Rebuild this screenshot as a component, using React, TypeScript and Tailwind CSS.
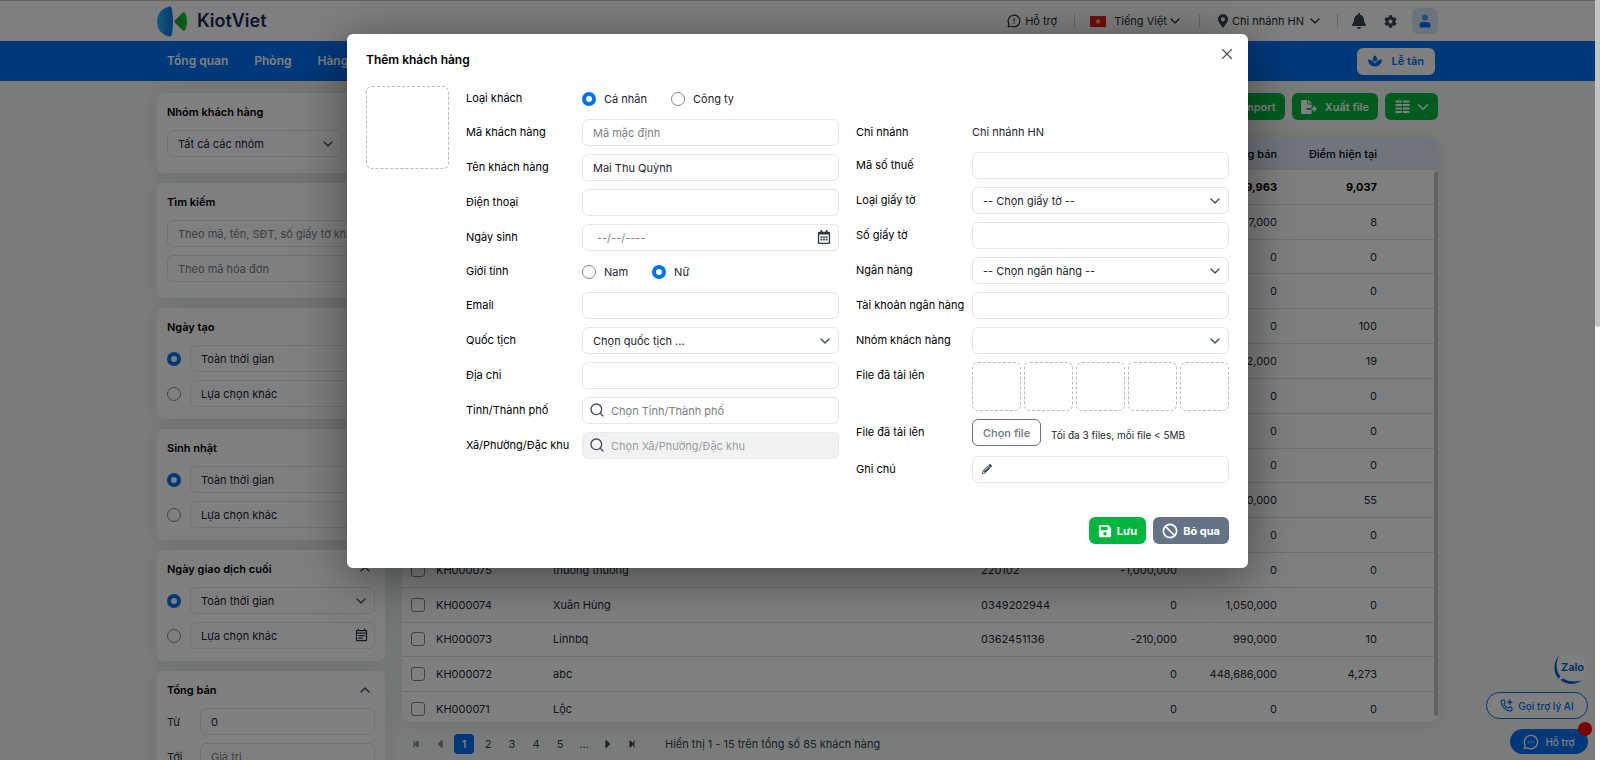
import type { ReactNode } from "react";
import { Ban, ChevronDown, ChevronUp, MessageCircleMore, MessageCircleWarning, Search, X } from "lucide-react";
import {
  FaBell,
  FaCaretLeft,
  FaCaretRight,
  FaCog,
  FaFileExport,
  FaFileImport,
  FaMapMarkerAlt,
  FaPencilAlt,
  FaRegCalendarAlt,
  FaSave,
  FaSpa,
  FaStepBackward,
  FaStepForward,
} from "react-icons/fa";
import { MdOutlineEventNote } from "react-icons/md";

const customers = [
  { code: "KH000085", name: "", phone: "", debt: "0", total: "37,000", points: "8" },
  { code: "KH000084", name: "", phone: "", debt: "0", total: "0", points: "0" },
  { code: "KH000083", name: "", phone: "", debt: "0", total: "0", points: "0" },
  { code: "KH000082", name: "", phone: "", debt: "0", total: "0", points: "100" },
  { code: "KH000081", name: "", phone: "", debt: "0", total: "2,000", points: "19" },
  { code: "KH000080", name: "", phone: "", debt: "0", total: "0", points: "0" },
  { code: "KH000079", name: "", phone: "", debt: "0", total: "0", points: "0" },
  { code: "KH000078", name: "", phone: "", debt: "0", total: "0", points: "0" },
  { code: "KH000077", name: "", phone: "", debt: "0", total: "550,000", points: "55" },
  { code: "KH000076", name: "", phone: "", debt: "0", total: "0", points: "0" },
  { code: "KH000075", name: "thương thương", phone: "220102", debt: "-1,000,000", total: "0", points: "0" },
  { code: "KH000074", name: "Xuân Hùng", phone: "0349202944", debt: "0", total: "1,050,000", points: "0" },
  { code: "KH000073", name: "Linhbq", phone: "0362451136", debt: "-210,000", total: "990,000", points: "10" },
  { code: "KH000072", name: "abc", phone: "", debt: "0", total: "448,686,000", points: "4,273" },
  { code: "KH000071", name: "Lộc", phone: "", debt: "0", total: "0", points: "0" },
];

const fieldClass =
  "block h-[27px] w-full rounded-md border border-[#e3e5e9] bg-white px-2.5 text-[#1d2433] placeholder:text-[#7b8086] focus:outline-none";

const radioClass =
  "h-3.5 w-3.5 shrink-0 appearance-none rounded-full border border-[#7d8794] bg-white checked:border-4 checked:border-[#0070f4]";

function SelectBox({ id, label, children }: { id?: string; label?: string; children: ReactNode }) {
  return (
    <div className="relative w-full">
      <select id={id} aria-label={label} className={`${fieldClass} appearance-none pr-6`}>
        {children}
      </select>
      <ChevronDown className="pointer-events-none absolute right-1.5 top-1.5 h-4 w-4 text-[#3f4b5b]" />
    </div>
  );
}

function Field({ label, htmlFor, children }: { label: string; htmlFor?: string; children: ReactNode }) {
  return (
    <div className="flex">
      <label htmlFor={htmlFor} className="h-[27px] w-[116px] shrink-0 whitespace-nowrap leading-[26px] text-black">
        {label}
      </label>
      <div className="min-w-0 flex-1">{children}</div>
    </div>
  );
}

function RadioRow({ label, name, options, selected }: { label: string; name: string; options: string[]; selected: string }) {
  return (
    <fieldset className="flex h-[25px] items-center">
      <legend className="float-left w-[116px] leading-[25px] text-black">{label}</legend>
      <div className="flex gap-6">
        {options.map((option) => (
          <label key={option} className="flex items-center gap-2 text-[#1d2433]">
            <input type="radio" name={name} defaultChecked={option === selected} className={radioClass} />
            {option}
          </label>
        ))}
      </div>
    </fieldset>
  );
}

function Logo() {
  return (
    <a href="#home" className="flex items-center gap-2.5">
      <svg width="30" height="31" viewBox="0 0 30 31" aria-hidden="true">
        <defs>
          <linearGradient id="logo-blue" x1="0" y1="0" x2="1" y2="0">
            <stop offset="0" stopColor="#27b4f5" />
            <stop offset="1" stopColor="#0a6fe8" />
          </linearGradient>
          <linearGradient id="logo-green" x1="0" y1="0" x2="1" y2="0">
            <stop offset="0" stopColor="#0f9f3f" />
            <stop offset="1" stopColor="#22c52e" />
          </linearGradient>
        </defs>
        <path d="M12 0.5C4 2.5 0 8.500 0 15.500S4 28.500 12 30.500C13.500 30.800 14.500 30 14.800 28.500C16.400 20 16.400 11 14.800 2.500C14.500 1 13.500 0.200 12 0.500Z" fill="url(#logo-blue)" />
        <path d="M18.200 14L25.500 6.800C26.800 5.800 28 6.200 28.600 7.800C30.500 12.500 30.500 18.500 28.600 23.200C28 24.800 26.800 25.200 25.500 24.200L18.200 17C17.300 16 17.300 15 18.200 14Z" fill="url(#logo-green)" />
      </svg>
      <span className="text-lg font-semibold text-[#152a5c]">KiotViet</span>
    </a>
  );
}

function VietnamFlag() {
  return (
    <svg width="16" height="11" viewBox="0 0 16 11" aria-hidden="true">
      <rect width="16" height="11" fill="#e01b22" />
      <path d="M8 2.200L8.800 4.500H11.200L9.300 5.900L10 8.200L8 6.800L6 8.200L6.700 5.900L4.800 4.500H7.200Z" fill="#ffdc00" />
    </svg>
  );
}

function Header() {
  return (
    <header>
      <div className="h-[41px] border-t border-[#c5c5c5] bg-white">
        <div className="mx-auto flex h-full max-w-[1281px] items-center justify-between">
          <Logo />
          <div className="flex items-center text-[#262b33]">
            <a href="#help" className="flex items-center gap-1">
              <MessageCircleWarning className="h-3.5 w-3.5" />
              Hỗ trợ
            </a>
            <span className="ml-[17px] mr-[15px] h-3.5 w-px bg-[#c9ccd1]" />
            <button type="button" className="flex items-center gap-2">
              <VietnamFlag />
              <span>Tiếng Việt</span>
              <ChevronDown className="-ml-2 h-4 w-4" />
            </button>
            <span className="ml-4 mr-[18px] h-3.5 w-px bg-[#c9ccd1]" />
            <button type="button" className="flex items-center gap-1">
              <FaMapMarkerAlt className="h-3.5 w-2.5 text-[#3a4250]" />
              <span>Chi nhánh HN</span>
              <ChevronDown className="-ml-px h-4 w-4" />
            </button>
            <span className="mx-3.5 h-3.5 w-px bg-[#c9ccd1]" />
            <button type="button" aria-label="Thông báo" className="mr-[18px]">
              <FaBell className="h-4 w-3.5 text-[#3a4250]" />
            </button>
            <button type="button" aria-label="Thiết lập" className="mr-[15px]">
              <FaCog className="h-[13px] w-[13px] text-[#3a4250]" />
            </button>
            <button
              type="button"
              aria-label="Tài khoản"
              className="flex h-[26px] w-[26px] items-center justify-center rounded-md bg-[#dbe7fb]"
            >
              <svg width="12" height="14" viewBox="0 0 12 14" aria-hidden="true">
                <circle cx="6" cy="3.500" r="3" fill="#4b96f5" />
                <path d="M0.500 12V11C0.500 9 2 8 4 8H8C10 8 11.500 9 11.500 11V12C11.500 13 11 13.500 10 13.500H2C1 13.500 0.500 13 0.500 12Z" fill="#0070f4" />
              </svg>
            </button>
          </div>
        </div>
      </div>
      <div className="h-10 bg-[#0070f4]">
        <div className="mx-auto flex h-full max-w-[1281px] items-center justify-between pl-2.5 pr-[3px]">
          <nav className="flex gap-[26px] text-xs font-semibold text-white">
            <a href="#overview">Tổng quan</a>
            <a href="#rooms">Phòng</a>
            <a href="#products">Hàng hóa</a>
          </nav>
          <a
            href="#reception"
            className="flex h-[27px] items-center gap-2.5 rounded-md bg-white px-[11px] font-semibold text-[#0070f4]"
          >
            <FaSpa className="h-3.5 w-3.5" />
            Lễ tân
          </a>
        </div>
      </div>
    </header>
  );
}

function FilterCard({ title, className, children }: { title: string; className: string; children: ReactNode }) {
  return (
    <section className={`rounded-md bg-white px-2.5 pt-2.5 shadow-[0_0_20px_rgba(70,85,130,0.16)] ${className}`}>
      <div className="mb-[9px] flex h-[18px] items-center justify-between">
        <h2 className="font-semibold text-black">{title}</h2>
        <button type="button" aria-label={`Thu gọn ${title}`} className="mr-0.5">
          <ChevronUp className="h-4 w-4 text-[#3f4b5b]" />
        </button>
      </div>
      <div className="flex flex-col gap-2">{children}</div>
    </section>
  );
}

function DateFilter({ title, name }: { title: string; name: string }) {
  return (
    <FilterCard title={title} className="pb-3">
      <div className="flex items-center gap-[9px]">
        <input type="radio" name={name} aria-label="Toàn thời gian" defaultChecked className={radioClass} />
        <SelectBox label={title}>
          <option>Toàn thời gian</option>
        </SelectBox>
      </div>
      <div className="flex items-center gap-[9px]">
        <input type="radio" name={name} aria-label="Lựa chọn khác" className={radioClass} />
        <div className="relative w-full">
          <input type="text" aria-label={`${title} khác`} defaultValue="Lựa chọn khác" className={fieldClass} />
          <MdOutlineEventNote className="absolute right-1.5 top-1.5 h-[15px] w-[15px] text-[#2b3646]" />
        </div>
      </div>
    </FilterCard>
  );
}

function Sidebar() {
  return (
    <aside className="flex w-[228px] shrink-0 flex-col gap-2.5">
      <FilterCard title="Nhóm khách hàng" className="pb-4">
        <div className="w-[175px]">
          <SelectBox label="Nhóm khách hàng">
            <option>Tất cả các nhóm</option>
          </SelectBox>
        </div>
      </FilterCard>
      <FilterCard title="Tìm kiếm" className="pb-4">
        <input type="text" aria-label="Tìm khách hàng" placeholder="Theo mã, tên, SĐT, số giấy tờ khách" className={fieldClass} />
        <input type="text" aria-label="Tìm hóa đơn" placeholder="Theo mã hóa đơn" className={fieldClass} />
      </FilterCard>
      <DateFilter title="Ngày tạo" name="created" />
      <DateFilter title="Sinh nhật" name="birthday" />
      <DateFilter title="Ngày giao dịch cuối" name="last-trade" />
      <FilterCard title="Tổng bán" className="pb-3">
        <div className="flex items-center">
          <label htmlFor="total-from" className="w-[33px] shrink-0 text-[#262b33]">Từ</label>
          <input id="total-from" type="text" defaultValue="0" className={fieldClass} />
        </div>
        <div className="flex items-center">
          <label htmlFor="total-to" className="w-[33px] shrink-0 text-[#262b33]">Tới</label>
          <input id="total-to" type="text" placeholder="Giá trị" className={fieldClass} />
        </div>
      </FilterCard>
    </aside>
  );
}

function Toolbar() {
  const buttonClass = "flex h-[27px] items-center rounded-md bg-[#00b63e]";
  return (
    <div className="flex justify-end gap-[7px] font-semibold text-white">
      <button type="button" className={`${buttonClass} gap-2 px-[9px]`}>
        <FaFileImport className="h-3.5 w-4" />
        Import
      </button>
      <button type="button" className={`${buttonClass} gap-2 px-[9px]`}>
        <FaFileExport className="h-3.5 w-4" />
        Xuất file
      </button>
      <button type="button" aria-label="Chọn cột hiển thị" className={`${buttonClass} gap-1 pl-2.5 pr-1.5`}>
        <svg width="15" height="13" viewBox="0 0 15 13" aria-hidden="true" stroke="currentColor" strokeWidth="2">
          <path d="M0.500 1.500H7M8 1.500H14.500M0.500 5H7M8 5H14.500M0.500 8.500H7M8 8.500H14.500M0.500 12H7M8 12H14.500" />
        </svg>
        <ChevronDown className="h-[18px] w-[18px]" />
      </button>
    </div>
  );
}

function CustomerTable() {
  const cellClass = "border-b border-[#dcdee2] p-0";
  return (
    <div className="relative mt-[19px] h-[583px] overflow-hidden rounded-lg bg-white shadow-[0_0_20px_rgba(70,85,130,0.16)]">
      <table className="h-[588px] w-full table-fixed border-separate border-spacing-0 text-left text-[#262b33]">
        <colgroup>
          <col className="w-[34px]" />
          <col className="w-[117px]" />
          <col />
          <col className="w-[90px]" />
          <col className="w-[106px]" />
          <col className="w-[100px]" />
          <col className="w-[100px]" />
          <col className="w-[61px]" />
        </colgroup>
        <thead>
          <tr className="h-[31px] bg-[#dfe9fb] text-black">
            <th className={`${cellClass} pl-[9px]`}>
              <input type="checkbox" aria-label="Chọn tất cả" className="block h-3.5 w-3.5 appearance-none rounded-[3px] border border-[#7d8794]" />
            </th>
            <th className={`${cellClass} font-medium`}>Mã khách hàng</th>
            <th className={`${cellClass} font-medium`}>Tên khách hàng</th>
            <th className={`${cellClass} font-medium`}>Điện thoại</th>
            <th className={`${cellClass} text-right font-medium`}>Nợ hiện tại</th>
            <th className={`${cellClass} text-right font-medium`}>Tổng bán</th>
            <th className={`${cellClass} text-right font-medium`}>Điểm hiện tại</th>
            <th className={cellClass} />
          </tr>
        </thead>
        <tbody>
          <tr className="font-bold text-black">
            <td colSpan={5} className={cellClass} />
            <td className={`${cellClass} text-right`}>452,739,963</td>
            <td className={`${cellClass} text-right`}>9,037</td>
            <td className={cellClass} />
          </tr>
          {customers.map((customer) => (
            <tr key={customer.code}>
              <td className={`${cellClass} pl-[9px]`}>
                <input
                  type="checkbox"
                  aria-label={`Chọn ${customer.code}`}
                  className="block h-3.5 w-3.5 appearance-none rounded-[3px] border border-[#7d8794]"
                />
              </td>
              <td className={cellClass}>{customer.code}</td>
              <td className={cellClass}>{customer.name}</td>
              <td className={cellClass}>{customer.phone}</td>
              <td className={`${cellClass} text-right`}>{customer.debt}</td>
              <td className={`${cellClass} text-right`}>{customer.total}</td>
              <td className={`${cellClass} text-right`}>{customer.points}</td>
              <td className={cellClass} />
            </tr>
          ))}
        </tbody>
      </table>
      <div className="absolute bottom-0 right-0 top-[31px] w-1 bg-white pb-1.5 pt-px">
        <div className="h-full rounded-full bg-[#c4c4c4]" />
      </div>
    </div>
  );
}

function Pagination() {
  const cellClass = "flex h-5 w-5 items-center justify-center rounded";
  return (
    <div className="mt-3 flex items-center gap-1 pl-1 text-[#3a4250]">
      <button type="button" aria-label="Trang đầu" className={`${cellClass} text-[#7d8794]`}>
        <FaStepBackward className="h-2 w-2" />
      </button>
      <button type="button" aria-label="Trang trước" className={`${cellClass} text-[#7d8794]`}>
        <FaCaretLeft className="h-3.5 w-3.5" />
      </button>
      <button type="button" className={`${cellClass} bg-[#0070f4] font-semibold text-white`}>1</button>
      <button type="button" className={cellClass}>2</button>
      <button type="button" className={cellClass}>3</button>
      <button type="button" className={cellClass}>4</button>
      <button type="button" className={cellClass}>5</button>
      <button type="button" className={cellClass}>...</button>
      <button type="button" aria-label="Trang sau" className={cellClass}>
        <FaCaretRight className="h-3.5 w-3.5" />
      </button>
      <button type="button" aria-label="Trang cuối" className={cellClass}>
        <FaStepForward className="h-2 w-2" />
      </button>
      <span className="ml-[19px]">Hiển thị 1 - 15 trên tổng số 85 khách hàng</span>
    </div>
  );
}

function ChatButtons() {
  return (
    <div className="absolute bottom-1.5 right-[7px] flex flex-col items-end text-[10px] text-[#0070f4]">
      <a href="#zalo" aria-label="Zalo" className="mb-2">
        <svg width="34" height="32" viewBox="0 0 34 32" aria-hidden="true">
          <circle cx="17" cy="16" r="16" fill="#fff" />
          <path d="M5.500 3.500C-1 9.500-1 21 4.500 26.500L6.500 24.500C1.500 19 1.500 9.500 5.500 3.500Z" fill="#0058d8" />
          <path d="M6 27.500C12 33 21 33.500 27.500 28.500C20 30.500 13 29.500 9.500 26.500C8.500 27.500 7.200 27.800 6 27.500Z" fill="#0058d8" />
          <text x="7" y="19" fontSize="11" fontWeight="600" fill="#0058d8">Zalo</text>
        </svg>
      </a>
      <button type="button" className="mb-2.5 flex h-[27px] w-[102px] items-center justify-center gap-[5px] rounded-full border border-[#0070f4] bg-white font-medium">
        <svg width="13" height="13" viewBox="0 0 24 24" fill="none" stroke="currentColor" strokeWidth="2.200" strokeLinecap="round" strokeLinejoin="round" aria-hidden="true">
          <path d="M13.832 16.568a1 1 0 0 0 1.213-.303l.355-.465A2 2 0 0 1 17 15h3a2 2 0 0 1 2 2v3a2 2 0 0 1-2 2A18 18 0 0 1 2 4a2 2 0 0 1 2-2h3a2 2 0 0 1 2 2v3a2 2 0 0 1-.800 1.600l-.468.351a1 1 0 0 0-.292 1.233 14 14 0 0 0 6.392 6.384" />
          <path d="M18 1L19.300 4.700L23 6L19.300 7.300L18 11L16.700 7.300L13 6L16.700 4.700Z" fill="currentColor" strokeWidth="1" />
        </svg>
        Gọi trợ lý AI
      </button>
      <button type="button" className="relative flex h-[25px] w-[78px] items-center justify-center gap-1.5 rounded-full bg-[#0070f4] font-medium text-white">
        <MessageCircleMore className="h-4 w-4" />
        Hỗ trợ
        <span className="absolute -right-1 -top-[7px] h-3.5 w-3.5 rounded-full bg-[#f40000]" />
      </button>
    </div>
  );
}

function CustomerDialog() {
  const searchClass = "pointer-events-none absolute left-[7px] top-[5px] h-4 w-4 text-[#3f4b5b]";
  return (
    <div
      role="dialog"
      aria-labelledby="dialog-title"
      className="w-[901px] max-w-full rounded-md bg-white px-[19px] pb-6 pt-[15px] shadow-[0_8px_50px_rgba(0,0,0,0.45)]"
    >
      <div className="flex justify-between">
        <h1 id="dialog-title" className="pt-px text-xs font-semibold leading-5 text-black">Thêm khách hàng</h1>
        <button type="button" aria-label="Đóng" className="-mr-[7px] -mt-1 flex h-[18px] w-[18px] items-center justify-center text-[#4a4a4a]">
          <X className="h-[18px] w-[18px]" strokeWidth={1.5} />
        </button>
      </div>

      <form className="mt-4 flex gap-[17px]">
        <div className="h-[83px] w-[83px] shrink-0 rounded-md border border-dashed border-[#b9b9b9]" />

        <div className="flex flex-1 flex-col gap-2">
          <RadioRow label="Loại khách" name="kind" options={["Cá nhân", "Công ty"]} selected="Cá nhân" />
          <Field label="Mã khách hàng" htmlFor="code">
            <input id="code" type="text" placeholder="Mã mặc định" className={fieldClass} />
          </Field>
          <Field label="Tên khách hàng" htmlFor="name">
            <input id="name" type="text" defaultValue="Mai Thu Quỳnh" className={fieldClass} />
          </Field>
          <Field label="Điện thoại" htmlFor="phone">
            <input id="phone" type="tel" className={fieldClass} />
          </Field>
          <Field label="Ngày sinh" htmlFor="birthday">
            <div className="relative">
              <input id="birthday" type="text" placeholder="--/--/----" className={`${fieldClass} pl-3.5`} />
              <FaRegCalendarAlt className="absolute right-2 top-1.5 h-3.5 w-3.5 text-[#2b3646]" />
            </div>
          </Field>
          <RadioRow label="Giới tính" name="gender" options={["Nam", "Nữ"]} selected="Nữ" />
          <Field label="Email" htmlFor="email">
            <input id="email" type="email" className={fieldClass} />
          </Field>
          <Field label="Quốc tịch" htmlFor="country">
            <SelectBox id="country">
              <option>Chọn quốc tịch ...</option>
            </SelectBox>
          </Field>
          <Field label="Địa chỉ" htmlFor="address">
            <input id="address" type="text" className={fieldClass} />
          </Field>
          <Field label="Tỉnh/Thành phố" htmlFor="province">
            <div className="relative">
              <input id="province" type="text" placeholder="Chọn Tỉnh/Thành phố" className={`${fieldClass} pl-7`} />
              <Search className={searchClass} />
            </div>
          </Field>
          <Field label="Xã/Phường/Đặc khu" htmlFor="ward">
            <div className="relative">
              <input
                id="ward"
                type="text"
                disabled
                placeholder="Chọn Xã/Phường/Đặc khu"
                className="block h-[27px] w-full rounded-md border border-[#ebebeb] bg-[#f2f2f2] pl-7 pr-2.5 placeholder:text-[#9a9ea3]"
              />
              <Search className={searchClass} />
            </div>
          </Field>
        </div>

        <div className="flex flex-1 flex-col gap-2 pt-[33px]">
          <div className="flex h-[25px] items-center">
            <span className="w-[116px] text-black">Chi nhánh</span>
            <span className="text-[#1d2433]">Chi nhánh HN</span>
          </div>
          <Field label="Mã số thuế" htmlFor="tax">
            <input id="tax" type="text" className={fieldClass} />
          </Field>
          <Field label="Loại giấy tờ" htmlFor="paper-type">
            <SelectBox id="paper-type">
              <option>-- Chọn giấy tờ --</option>
            </SelectBox>
          </Field>
          <Field label="Số giấy tờ" htmlFor="paper-number">
            <input id="paper-number" type="text" className={fieldClass} />
          </Field>
          <Field label="Ngân hàng" htmlFor="bank">
            <SelectBox id="bank">
              <option>-- Chọn ngân hàng --</option>
            </SelectBox>
          </Field>
          <Field label="Tài khoản ngân hàng" htmlFor="account">
            <input id="account" type="text" className={fieldClass} />
          </Field>
          <Field label="Nhóm khách hàng" htmlFor="group">
            <SelectBox id="group">
              <option></option>
            </SelectBox>
          </Field>
          <Field label="File đã tải lên">
            <div className="grid grid-cols-5 gap-[3px]">
              {[1, 2, 3, 4, 5].map((slot) => (
                <div key={slot} className="h-[49px] rounded-md border border-dashed border-[#b9b9b9]" />
              ))}
            </div>
          </Field>
          <Field label="File đã tải lên">
            <div className="flex items-center gap-2.5">
              <button type="button" className="h-[27px] rounded-md border border-[#667386] px-2.5 font-medium text-[#667386]">
                Chọn file
              </button>
              <span className="pt-1 text-[10px] text-[#1d2433]">Tối đa 3 files, mỗi file &lt; 5MB</span>
            </div>
          </Field>
          <div className="mt-0.5">
            <Field label="Ghi chú" htmlFor="note">
              <div className="relative">
                <input id="note" type="text" className={`${fieldClass} pl-7`} />
                <FaPencilAlt className="pointer-events-none absolute left-2.5 top-2 h-2.5 w-2.5 text-[#3f4b5b]" />
              </div>
            </Field>
          </div>
        </div>
      </form>

      <div className="mt-[34px] flex justify-end gap-[7px] font-bold text-white">
        <button type="submit" className="flex h-[27px] items-center gap-[5px] rounded-md bg-[#00b63e] px-[9px]">
          <FaSave className="h-3.5 w-3.5" />
          Lưu
        </button>
        <button type="button" className="flex h-[27px] items-center gap-[5px] rounded-md bg-[#667386] px-[9px]">
          <Ban className="h-4 w-4" strokeWidth={2.5} />
          Bỏ qua
        </button>
      </div>
    </div>
  );
}

export default function App() {
  return (
    <div className="flex h-screen overflow-hidden font-['Inter','Noto_Sans',sans-serif] text-[11px] leading-4">
      <div className="relative min-w-0 flex-1 overflow-hidden bg-[#f5f8f6]">
        <Header />
        <main className="mx-auto flex max-w-[1281px] gap-[17px] pt-3">
          <Sidebar />
          <div className="min-w-0 flex-1">
            <Toolbar />
            <CustomerTable />
            <Pagination />
          </div>
        </main>
        <ChatButtons />
        <div className="absolute inset-0 flex items-start justify-center bg-black/50 pt-[34px]">
          <CustomerDialog />
        </div>
      </div>
      <div className="w-[5px] bg-[#fafafa]">
        <div className="h-[327px] rounded-b-full bg-[#c4c4c4]" />
      </div>
    </div>
  );
}
